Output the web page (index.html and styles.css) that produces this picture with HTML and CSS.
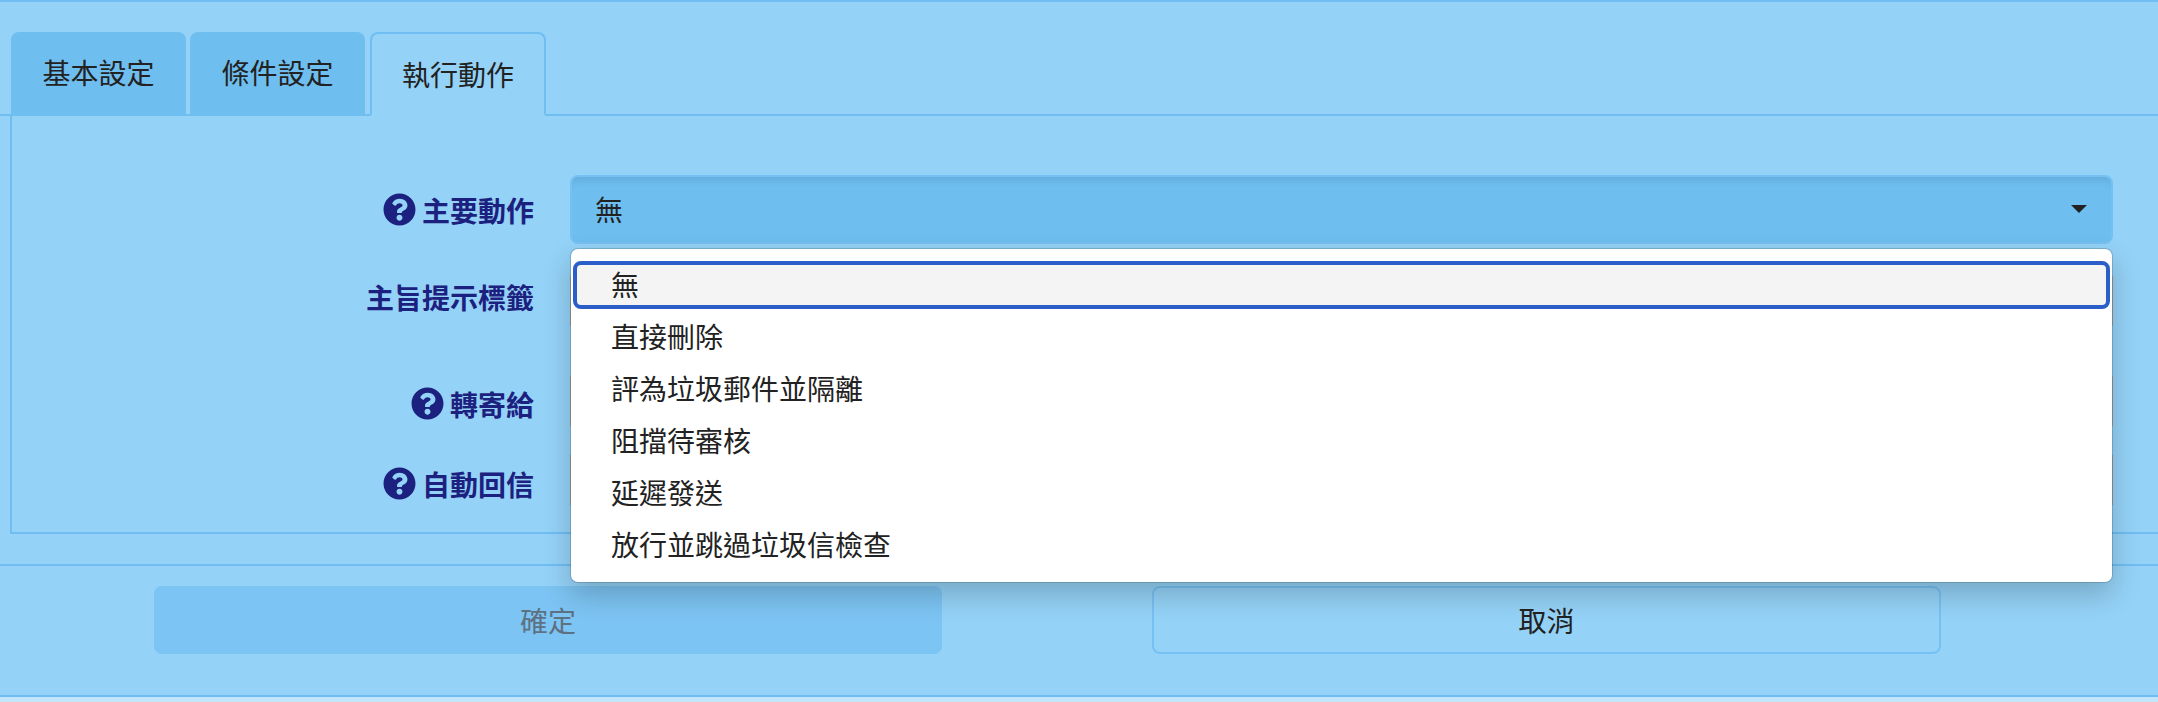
FILE: index.html
```html
<!DOCTYPE html>
<html lang="zh-Hant">
	<head>
		<meta charset="UTF-8" />
		<meta name="viewport" content="width=device-width, initial-scale=1.0" />
		<title>執行動作</title>
		<link rel="stylesheet" href="styles.css">
	</head>
	<body>
		<div class="tabs">
			<a class="tab">基本設定</a>
			<a class="tab">條件設定</a>
			<a class="tab active">執行動作</a>
		</div>
		<div class="panel">
			<div class="row row-action">
				<label class="row-label">
					<svg class="help" viewBox="0 0 512 512"><path d="M504 256c0 137-111 248-248 248S8 393 8 256 119 8 256 8s248 111 248 248zM262.700 90c-54.500 0-89.300 23-116.500 63.800-3.500 5.300-2.300 12.400 2.700 16.300l34.700 26.300c5.200 3.900 12.600 3 16.700-2.100 17.900-22.700 30.100-35.800 57.300-35.800 20.400 0 45.700 13.100 45.700 33 0 15-12.400 22.700-32.600 34-23.600 13.200-54.800 29.700-54.800 70.900V300c0 6.600 5.400 12 12 12h56c6.600 0 12-5.400 12-12v-1.300c0-28.600 83.400-29.800 83.400-107.100C379.300 133.300 318.900 90 262.700 90zM256 339c-25.400 0-46 20.600-46 46s20.600 46 46 46 46-20.600 46-46-20.600-46-46-46z"/></svg>
					主要動作
				</label>
				<div class="select-wrap">
					<div class="select">
						<span>無</span>
						<i class="caret"></i>
					</div>
					<ul class="dropdown">
						<li class="option selected">無</li>
						<li class="option">直接刪除</li>
						<li class="option">評為垃圾郵件並隔離</li>
						<li class="option">阻擋待審核</li>
						<li class="option">延遲發送</li>
						<li class="option">放行並跳過垃圾信檢查</li>
					</ul>
				</div>
			</div>
			<div class="row row-tag">
				<label class="row-label">主旨提示標籤</label>
				<div class="field field-tag"></div>
			</div>
			<div class="row row-forward">
				<label class="row-label">
					<svg class="help" viewBox="0 0 512 512"><path d="M504 256c0 137-111 248-248 248S8 393 8 256 119 8 256 8s248 111 248 248zM262.700 90c-54.500 0-89.300 23-116.500 63.800-3.500 5.300-2.300 12.400 2.700 16.300l34.700 26.300c5.200 3.900 12.600 3 16.700-2.100 17.900-22.700 30.100-35.800 57.300-35.800 20.400 0 45.700 13.100 45.700 33 0 15-12.400 22.700-32.600 34-23.600 13.200-54.800 29.700-54.800 70.900V300c0 6.600 5.400 12 12 12h56c6.600 0 12-5.400 12-12v-1.300c0-28.600 83.400-29.800 83.400-107.100C379.300 133.300 318.900 90 262.700 90zM256 339c-25.400 0-46 20.600-46 46s20.600 46 46 46 46-20.600 46-46-20.600-46-46-46z"/></svg>
					轉寄給
				</label>
				<div class="field"></div>
			</div>
			<div class="row row-reply">
				<label class="row-label">
					<svg class="help" viewBox="0 0 512 512"><path d="M504 256c0 137-111 248-248 248S8 393 8 256 119 8 256 8s248 111 248 248zM262.700 90c-54.500 0-89.300 23-116.500 63.800-3.500 5.300-2.300 12.400 2.700 16.300l34.700 26.300c5.200 3.900 12.600 3 16.700-2.100 17.900-22.700 30.100-35.800 57.300-35.800 20.400 0 45.700 13.100 45.700 33 0 15-12.400 22.700-32.600 34-23.600 13.200-54.800 29.700-54.800 70.900V300c0 6.600 5.400 12 12 12h56c6.600 0 12-5.400 12-12v-1.300c0-28.600 83.400-29.800 83.400-107.100C379.300 133.300 318.900 90 262.700 90zM256 339c-25.400 0-46 20.600-46 46s20.600 46 46 46 46-20.600 46-46-20.600-46-46-46z"/></svg>
					自動回信
				</label>
				<div class="field field-reply"></div>
			</div>
		</div>
		<div class="footer">
			<button class="btn btn-ok" disabled>確定</button>
			<button class="btn btn-cancel">取消</button>
		</div>
	</body>
</html>
```
FILE: styles.css
```css
* {
	margin: 0;
	padding: 0;
	box-sizing: border-box;
}

html {
	background-color: #c3e5f9;
}

body {
	font-family: "Noto Sans CJK TC", "Noto Sans", sans-serif;
	font-size: 28px;
	color: #222;
	height: 697px;
	overflow: hidden;
	background-color: #94d2f7;
	border-top: 2px solid #70bdf2;
	border-bottom: 2px solid #70bdf2;
}

.tabs {
	display: flex;
	gap: 4px;
	height: 114px;
	padding: 30px 0 0 11px;
	border-bottom: 2px solid #70bdf2;
}

.tab {
	width: 175px;
	height: 84px;
	line-height: 80px;
	text-align: center;
	background-color: #6ebef0;
	border-radius: 8px 8px 0 0;
}

.tab.active {
	width: 176px;
	margin-left: 1px;
	height: 84px;
	background-color: #94d2f7;
	border: 2px solid #70bdf2;
	border-bottom: 2px solid #94d2f7;
}

.panel {
	height: 418px;
	margin-left: 10px;
	padding-top: 59px;
	border-left: 2px solid #70bdf2;
	border-bottom: 2px solid #70bdf2;
}

.row {
	display: flex;
	align-items: center;
	gap: 36px;
	height: 69px;
}

.row-tag {
	margin-top: 18px;
}

.row-forward {
	margin-top: 38px;
}

.row-reply {
	margin-top: 11px;
}

.row-label {
	display: flex;
	align-items: center;
	justify-content: flex-end;
	gap: 6px;
	width: 522px;
	font-weight: 700;
	color: #1c2180;
	flex-shrink: 0;
}

.help {
	width: 33px;
	height: 33px;
	fill: #1c2180;
}

.field {
	align-self: flex-start;
	margin-top: 7px;
	width: 1543px;
	height: 50px;
	background-color: #fff;
	border: 1px solid #aaa;
}

.field-tag {
	margin-top: 14px;
}

.field-reply {
	margin-top: 6px;
}

.select-wrap {
	position: relative;
	width: 1543px;
}

.select {
	display: flex;
	align-items: center;
	justify-content: space-between;
	height: 69px;
	padding: 0 24px 2px 23px;
	background-color: #6ebef0;
	border: 2px solid #76c1f3;
	border-radius: 8px;
	box-shadow: inset 0 10px 10px -8px rgba(0, 0, 0, 0.12);
}

.caret {
	width: 0;
	height: 0;
	border-left: 8px solid transparent;
	border-right: 8px solid transparent;
	border-top: 8px solid #222;
}

.dropdown {
	position: absolute;
	top: 73px;
	left: 0;
	width: 1543px;
	height: 335px;
	padding: 9px 0;
	list-style: none;
	background-color: #fff;
	background-clip: padding-box;
	border: 1px solid rgba(0, 0, 0, 0.15);
	border-radius: 8px;
	box-shadow: 0 12px 28px rgba(0, 0, 0, 0.2);
	z-index: 10;
}

.option {
	height: 52px;
	line-height: 52px;
	padding-left: 40px;
}

.option.selected {
	height: 48px;
	line-height: 46px;
	background-color: #f4f4f4;
	outline: 4px solid #2b5ec8;
	outline-offset: -4px;
	border-radius: 8px;
	margin: 3px 2px 1px;
	padding-left: 38px;
}

.footer {
	display: flex;
	gap: 210px;
	height: 130px;
	padding: 20px 0 0 154px;
	border-top: 2px solid #70bdf2;
	margin-top: 30px;
}

.btn {
	width: 788px;
	height: 68px;
	font-family: inherit;
	font-size: 28px;
	color: #222;
	border-radius: 8px;
	background: none;
}

.btn-ok {
	background-color: #7cc4f3;
	border: none;
	color: #5d7183;
}

.btn-cancel {
	width: 789px;
	border: 2px solid #76c1f3;
}
```
